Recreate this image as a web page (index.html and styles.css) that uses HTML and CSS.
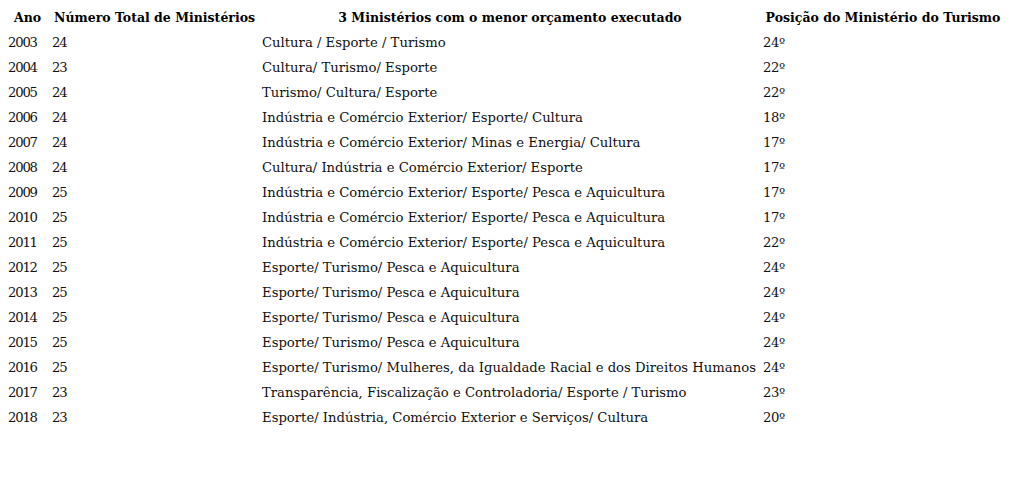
FILE: index.html
```html
<!DOCTYPE html>
<html lang="pt">
<head>
<meta charset="utf-8">
<link rel="stylesheet" href="styles.css">
</head>
<body>
<table class="budget">
  <colgroup>
    <col class="c-year"><col class="c-total"><col class="c-min"><col class="c-pos">
  </colgroup>
  <thead>
    <tr><th>Ano</th><th>Número Total de Ministérios</th><th>3 Ministérios com o menor orçamento executado</th><th>Posição do Ministério do Turismo</th></tr>
  </thead>
  <tbody>
    <tr><td class="num">2003</td><td class="num">24</td><td>Cultura / Esporte / Turismo</td><td class="pos">24º</td></tr>
    <tr><td class="num">2004</td><td class="num">23</td><td>Cultura/ Turismo/ Esporte</td><td class="pos">22º</td></tr>
    <tr><td class="num">2005</td><td class="num">24</td><td>Turismo/ Cultura/ Esporte</td><td class="pos">22º</td></tr>
    <tr><td class="num">2006</td><td class="num">24</td><td>Indústria e Comércio Exterior/ Esporte/ Cultura</td><td class="pos">18º</td></tr>
    <tr><td class="num">2007</td><td class="num">24</td><td>Indústria e Comércio Exterior/ Minas e Energia/ Cultura</td><td class="pos">17º</td></tr>
    <tr><td class="num">2008</td><td class="num">24</td><td>Cultura/ Indústria e Comércio Exterior/ Esporte</td><td class="pos">17º</td></tr>
    <tr><td class="num">2009</td><td class="num">25</td><td>Indústria e Comércio Exterior/ Esporte/ Pesca e Aquicultura</td><td class="pos">17º</td></tr>
    <tr><td class="num">2010</td><td class="num">25</td><td>Indústria e Comércio Exterior/ Esporte/ Pesca e Aquicultura</td><td class="pos">17º</td></tr>
    <tr><td class="num">2011</td><td class="num">25</td><td>Indústria e Comércio Exterior/ Esporte/ Pesca e Aquicultura</td><td class="pos">22º</td></tr>
    <tr><td class="num">2012</td><td class="num">25</td><td>Esporte/ Turismo/ Pesca e Aquicultura</td><td class="pos">24º</td></tr>
    <tr><td class="num">2013</td><td class="num">25</td><td>Esporte/ Turismo/ Pesca e Aquicultura</td><td class="pos">24º</td></tr>
    <tr><td class="num">2014</td><td class="num">25</td><td>Esporte/ Turismo/ Pesca e Aquicultura</td><td class="pos">24º</td></tr>
    <tr><td class="num">2015</td><td class="num">25</td><td>Esporte/ Turismo/ Pesca e Aquicultura</td><td class="pos">24º</td></tr>
    <tr><td class="num">2016</td><td class="num">25</td><td>Esporte/ Turismo/ Mulheres, da Igualdade Racial e dos Direitos Humanos</td><td class="pos">24º</td></tr>
    <tr><td class="num">2017</td><td class="num">23</td><td>Transparência, Fiscalização e Controladoria/ Esporte / Turismo</td><td class="pos">23º</td></tr>
    <tr><td class="num">2018</td><td class="num">23</td><td>Esporte/ Indústria, Comércio Exterior e Serviços/ Cultura</td><td class="pos">20º</td></tr>
  </tbody>
</table>
</body>
</html>
```
FILE: styles.css
```css
html, body {
  margin: 0;
  padding: 0;
  background: #ffffff;
}
body {
  padding: 5px 0 0 8px;
  font-family: "DejaVu Serif", serif;
  color: #000000;
}
.budget {
  border-collapse: collapse;
  border-spacing: 0;
  table-layout: fixed;
  width: 995px;
}
.c-year { width: 44px; }
.c-total { width: 210px; }
.c-min { width: 501px; }
.c-pos { width: 240px; }
.budget th,
.budget td {
  padding: 0 5px 0 0;
  height: 25px;
  vertical-align: middle;
  white-space: nowrap;
  line-height: 25px;
}
.budget th {
  font-size: 12.5px;
  font-weight: bold;
  text-align: center;
}
.budget td {
  font-size: 13.2px;
  font-weight: normal;
  text-align: left;
  color: #111111;
}
.budget td.num {
  letter-spacing: -1.2px;
}
.budget td.pos {
  letter-spacing: -0.4px;
}
.budget th:last-child,
.budget td:last-child {
  padding-right: 0;
}
```
